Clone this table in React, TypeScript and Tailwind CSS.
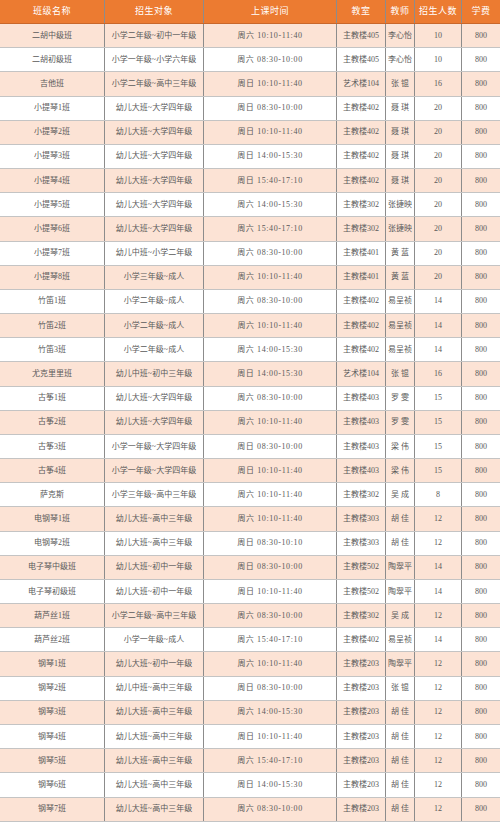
const headers = ["班级名称", "招生对象", "上课时间", "教室", "教师", "招生人数", "学费"];

type Row = [string, string, string, string, string, string];

const rows: Row[] = [
  ["二胡中级班", "小学二年级~初中一年级", "周六 10:10-11:40", "主教楼405", "李心怡", "10"],
  ["二胡初级班", "小学一年级~小学六年级", "周六 08:30-10:00", "主教楼405", "李心怡", "10"],
  ["吉他班", "小学二年级~高中三年级", "周日 10:10-11:40", "艺术楼104", "张 锟", "16"],
  ["小提琴1班", "幼儿大班~大学四年级", "周日 08:30-10:00", "主教楼402", "聂 琪", "20"],
  ["小提琴2班", "幼儿大班~大学四年级", "周日 10:10-11:40", "主教楼402", "聂 琪", "20"],
  ["小提琴3班", "幼儿大班~大学四年级", "周日 14:00-15:30", "主教楼402", "聂 琪", "20"],
  ["小提琴4班", "幼儿大班~大学四年级", "周日 15:40-17:10", "主教楼402", "聂 琪", "20"],
  ["小提琴5班", "幼儿大班~大学四年级", "周六 14:00-15:30", "主教楼302", "张捷映", "20"],
  ["小提琴6班", "幼儿大班~大学四年级", "周六 15:40-17:10", "主教楼302", "张捷映", "20"],
  ["小提琴7班", "幼儿中班~小学二年级", "周六 08:30-10:00", "主教楼401", "黄 蓝", "20"],
  ["小提琴8班", "小学三年级~成人", "周六 10:10-11:40", "主教楼401", "黄 蓝", "20"],
  ["竹笛1班", "小学二年级~成人", "周六 08:30-10:00", "主教楼402", "易呈祯", "14"],
  ["竹笛2班", "小学二年级~成人", "周六 10:10-11:40", "主教楼402", "易呈祯", "14"],
  ["竹笛3班", "小学二年级~成人", "周六 14:00-15:30", "主教楼402", "易呈祯", "14"],
  ["尤克里里班", "幼儿中班~初中三年级", "周日 14:00-15:30", "艺术楼104", "张 锟", "16"],
  ["古筝1班", "幼儿大班~大学四年级", "周六 08:30-10:00", "主教楼403", "罗 雯", "15"],
  ["古筝2班", "幼儿大班~大学四年级", "周六 10:10-11:40", "主教楼403", "罗 雯", "15"],
  ["古筝3班", "小学一年级~大学四年级", "周日 08:30-10:00", "主教楼403", "梁 伟", "15"],
  ["古筝4班", "小学一年级~大学四年级", "周日 10:10-11:40", "主教楼403", "梁 伟", "15"],
  ["萨克斯", "小学三年级~高中三年级", "周六 10:10-11:40", "主教楼302", "吴 成", "8"],
  ["电钢琴1班", "幼儿大班~高中三年级", "周六 10:10-11:40", "主教楼303", "胡 佳", "12"],
  ["电钢琴2班", "幼儿大班~高中三年级", "周日 08:30-10:10", "主教楼303", "胡 佳", "12"],
  ["电子琴中级班", "幼儿大班~初中一年级", "周日 08:30-10:00", "主教楼502", "陶翠平", "14"],
  ["电子琴初级班", "幼儿大班~初中一年级", "周日 10:10-11:40", "主教楼502", "陶翠平", "14"],
  ["葫芦丝1班", "小学二年级~高中三年级", "周六 08:30-10:00", "主教楼302", "吴 成", "12"],
  ["葫芦丝2班", "小学一年级~成人", "周六 15:40-17:10", "主教楼402", "易呈祯", "14"],
  ["钢琴1班", "幼儿大班~初中一年级", "周六 10:10-11:40", "主教楼203", "陶翠平", "12"],
  ["钢琴2班", "幼儿中班~高中三年级", "周日 08:30-10:00", "主教楼203", "张 锟", "12"],
  ["钢琴3班", "幼儿大班~高中三年级", "周六 14:00-15:30", "主教楼203", "胡 佳", "12"],
  ["钢琴4班", "幼儿大班~高中三年级", "周日 10:10-11:40", "主教楼203", "胡 佳", "12"],
  ["钢琴5班", "幼儿大班~高中三年级", "周六 15:40-17:10", "主教楼203", "胡 佳", "12"],
  ["钢琴6班", "幼儿大班~高中三年级", "周日 14:00-15:30", "主教楼203", "胡 佳", "12"],
  ["钢琴7班", "幼儿大班~高中三年级", "周六 08:30-10:00", "主教楼203", "胡 佳", "12"],
];

const cols = "grid grid-cols-[105px_99px_133px_49px_29px_47px_38px]";

function Cell({ children, last }: { children: React.ReactNode; last?: boolean }) {
  return (
    <div
      className={`flex items-center justify-center whitespace-nowrap ${
        last ? "" : "border-r border-[#8c8c8c]"
      }`}
    >
      {children}
    </div>
  );
}

export default function App() {
  return (
    <div
      className="w-[500px] h-[824px] overflow-hidden bg-white text-[8px] text-[#5a5a5a]"
      style={{ fontFamily: '"Liberation Serif", "Noto Sans CJK SC", serif' }}
    >
      <div className={`${cols} h-[24px] bg-[#ec7b31] text-[9px] text-white tracking-[0.5px] border-b border-[#c9672a]`}>
        {headers.map((h, i) => (
          <Cell key={h} last={i === headers.length - 1}>
            {h}
          </Cell>
        ))}
      </div>

      {rows.map((r, idx) => (
        <div
          key={r[0]}
          className={`${cols} h-[24.18px] border-b border-[#c4c4c4] ${
            idx % 2 === 0 ? "bg-[#fce3d5]" : "bg-white"
          }`}
        >
          <Cell>{r[0]}</Cell>
          <Cell>{r[1]}</Cell>
          <Cell>
            <span className="tracking-[0.6px]">{r[2]}</span>
          </Cell>
          <Cell>{r[3]}</Cell>
          <Cell>{r[4]}</Cell>
          <Cell>{r[5]}</Cell>
          <Cell last>800</Cell>
        </div>
      ))}
    </div>
  );
}
